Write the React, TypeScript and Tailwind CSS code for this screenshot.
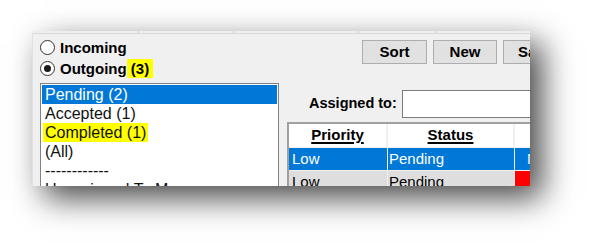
import React from "react";

const font = { fontFamily: '"Liberation Sans", Arial, sans-serif' };

function Radio({ checked }: { checked?: boolean }) {
  return (
    <div className="w-[15px] h-[15px] rounded-full border border-[#333333] bg-white flex items-center justify-center shrink-0">
      {checked && <div className="w-[7px] h-[7px] rounded-full bg-[#1a1a1a]" />}
    </div>
  );
}

export default function App() {
  return (
    <div className="w-[595px] h-[251px] bg-white pl-[32px] pt-[31px] overflow-hidden" style={font}>
      <div className="w-[498px] h-[155px] bg-[#f0f0f0] overflow-hidden flex flex-col shadow-[12px_12px_30px_rgba(0,0,0,0.72)]">
        <div className="h-[2px] flex bg-[#eeeeee]">
          <div className="w-[107px] border-r border-[#d0d0d0]" />
          <div className="w-[95px] border-r border-[#d0d0d0]" />
          <div className="w-[125px] border-r border-[#d0d0d0]" />
          <div className="w-[78px] border-r border-[#d0d0d0]" />
        </div>
        <div className="h-px bg-[#d9d9d9]" />
        <div className="flex-1 flex border-l border-[#e2e2e2] min-h-0">
          <div className="w-[254px] shrink-0 pl-[7px] pt-[3px]">
            <div className="h-[21px] flex items-center gap-[5px]">
              <Radio />
              <span className="text-[15px] font-bold text-black leading-[19px]">Incoming</span>
            </div>
            <div className="h-[21px] flex items-center gap-[5px]">
              <Radio checked />
              <span className="text-[15px] font-bold text-black leading-[19px] flex">
                <span>Outgoing</span>
                <span className="bg-[#ffff00] pr-[4px] whitespace-pre">{" (3)"}</span>
              </span>
            </div>
            <div className="mt-[4px] w-[239px] h-[120px] border border-[#828282] bg-white p-px text-[16px] leading-[19px] text-[#111111]">
              <div className="h-[19px] bg-[#0078d7] text-white pl-[3px]">Pending (2)</div>
              <div className="h-[19px] pl-[3px]">Accepted (1)</div>
              <div className="h-[19px] pl-[1px]">
                <span className="inline-block bg-[#ffff00] pl-[2px] pr-[2px]">Completed (1)</span>
              </div>
              <div className="h-[19px] pl-[3px]">(All)</div>
              <div className="h-[19px] pl-[3px]">------------</div>
              <div className="h-[19px] pl-[3px] whitespace-nowrap">Unassigned To Me</div>
            </div>
          </div>
          <div className="flex-1 min-w-0">
            <div className="mt-[6px] flex gap-[6px] pl-[75px]">
              <div className="w-[65px] h-[24px] shrink-0 border border-[#adadad] bg-[#e1e1e1] flex items-center justify-center text-[15px] font-bold text-black">Sort</div>
              <div className="w-[64px] h-[24px] shrink-0 border border-[#adadad] bg-[#e1e1e1] flex items-center justify-center text-[15px] font-bold text-black">New</div>
              <div className="w-[65px] h-[24px] shrink-0 border border-[#adadad] bg-[#e1e1e1] flex items-center justify-center text-[15px] font-bold text-black">Save</div>
            </div>
            <div className="mt-[26px] flex items-center gap-[5px] pl-[22px]">
              <span className="text-[14.5px] font-bold text-black whitespace-nowrap">Assigned to:</span>
              <div className="w-[200px] h-[28px] shrink-0 border border-[#7a7a7a] bg-white" />
            </div>
            <div className="mt-[4px] w-[300px] border-2 border-[#a0a0a0] bg-[#f0f0f0] flex flex-col gap-px">
              <div className="h-[23px] flex gap-[2px] text-[15px] font-bold text-black">
                <div className="w-[97px] shrink-0 bg-white flex items-center justify-center"><span className="underline decoration-2 underline-offset-2">Priority</span></div>
                <div className="w-[125px] shrink-0 bg-white flex items-center justify-center"><span className="underline decoration-2 underline-offset-2">Status</span></div>
                <div className="flex-1 bg-white" />
              </div>
              <div className="h-[22px] flex gap-[1px] text-[15px] text-white">
                <div className="w-[98px] shrink-0 bg-[#0078d7] flex items-center pl-[3px]">Low</div>
                <div className="w-[126px] shrink-0 bg-[#0078d7] flex items-center pl-px">Pending</div>
                <div className="flex-1 bg-[#0078d7] flex items-center pl-[12px]">No</div>
              </div>
              <div className="h-[22px] flex gap-[1px] text-[15px] text-black">
                <div className="w-[98px] shrink-0 bg-[#dedede] flex items-center pl-[3px]">Low</div>
                <div className="w-[126px] shrink-0 bg-[#dedede] flex items-center pl-px">Pending</div>
                <div className="flex-1 bg-[#ff0000]" />
              </div>
            </div>
          </div>
        </div>
      </div>
    </div>
  );
}
